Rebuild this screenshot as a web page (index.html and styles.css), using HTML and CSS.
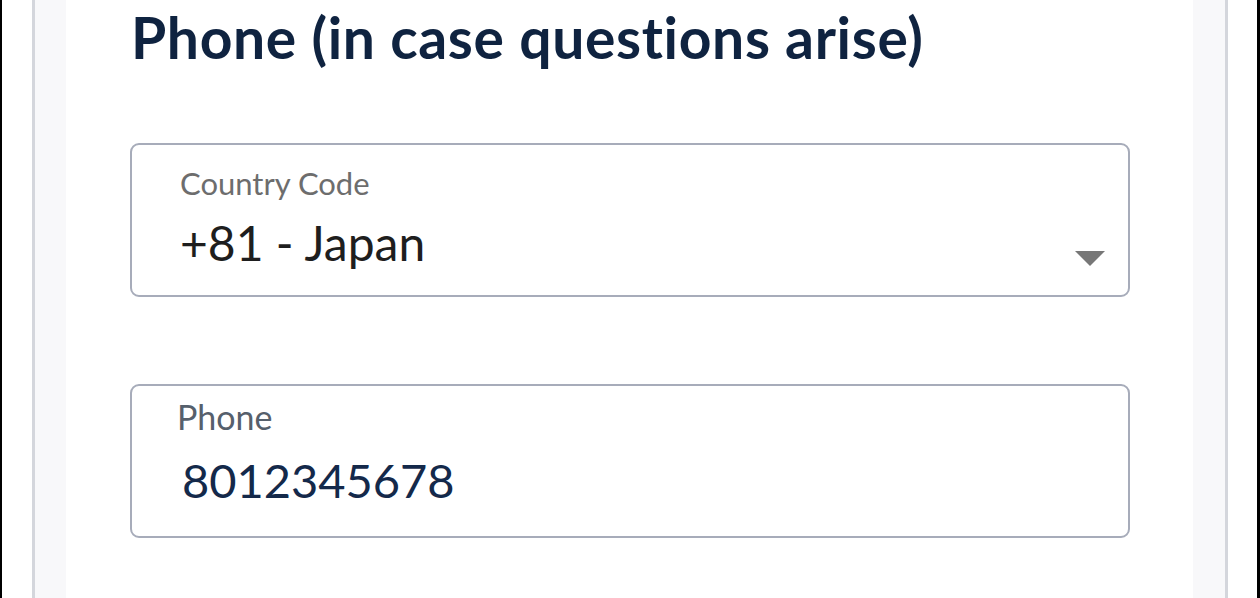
FILE: index.html
```html
<!DOCTYPE html>
<html>
<head>
<meta charset="utf-8">
<link rel="stylesheet" href="styles.css">
</head>
<body>
<div class="frame">
  <div class="panel">
    <div class="content">
      <h1 class="title">Phone (in case questions arise)</h1>
      <div class="field field-select">
        <div class="label label-cc">Country Code</div>
        <div class="value value-cc">+81 - Japan</div>
        <svg class="arrow" width="30" height="15" viewBox="0 0 30 15"><polygon points="0,0 30,0 15,15" fill="#777"/></svg>
      </div>
      <div class="field field-phone">
        <div class="label label-ph">Phone</div>
        <div class="value value-ph">8012345678</div>
      </div>
    </div>
  </div>
</div>
</body>
</html>
```

FILE: styles.css
```css
html, body {
  margin: 0;
  padding: 0;
  background: #fff;
}
body {
  font-family: Lato, "Open Sans", sans-serif;
  font-variant-ligatures: none;
}
.frame {
  height: 598px;
  box-sizing: border-box;
  border-left: 2px solid #000;
  border-right: 3px solid #000;
  padding: 0 29px 0 30px;
  overflow: hidden;
}
.panel {
  height: 100%;
  box-sizing: border-box;
  border-left: 3px solid #d4d6dc;
  border-right: 3px solid #d4d6dc;
  background: #f8f8fa;
  padding: 0 32px 0 31px;
}
.content {
  height: 100%;
  background: #fff;
  padding: 0 63px 0 64px;
  overflow: hidden;
}
.title {
  margin: 0;
  padding-top: 3px;
  padding-left: 1px;
  font-size: 57px;
  font-weight: 700;
  line-height: 68px;
  color: #0f2340;
  letter-spacing: 0.65px;
}
.field {
  position: relative;
  box-sizing: border-box;
  height: 154px;
  border: 2px solid #a7acba;
  border-radius: 9px;
  padding-left: 48px;
}
.field-select {
  margin-top: 72px;
  padding-top: 19px;
}
.field-phone {
  margin-top: 87px;
  padding-top: 12px;
}
.label {
  font-size: 31px;
  line-height: 38px;
  color: #6d6d6d;
}
.label-ph {
  font-size: 34px;
  color: #56606c;
  margin-left: -3px;
}
.value {
  margin-top: 16px;
  font-size: 48px;
  line-height: 50px;
  color: #1e1e1e;
}
.value-ph {
  margin-top: 19px;
  font-size: 47px;
  color: #14294a;
  padding-left: 2px;
}
.arrow {
  position: absolute;
  right: 23px;
  top: 106px;
}
```
